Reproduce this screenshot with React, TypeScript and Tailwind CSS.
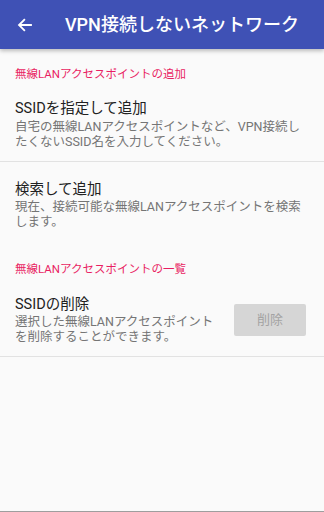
const font = "font-['Roboto','Noto_Sans_CJK_JP',sans-serif]";

function SectionHeader({ children }: { children: React.ReactNode }) {
  return (
    <div className="px-[15px] text-[11.5px] leading-[16px] text-[#e91e63]">
      {children}
    </div>
  );
}

export default function App() {
  return (
    <div className={`${font} flex h-[512px] w-[324px] flex-col overflow-hidden bg-[#fafafa]`}>
      <header className="relative z-10 flex h-[49px] shrink-0 items-center bg-[#3f51b5] shadow-[0_2px_4px_rgba(0,0,0,0.25)]">
        <svg
          className="ml-[16px] h-[18px] w-[18px]"
          viewBox="0 0 24 24"
          fill="none"
          stroke="white"
          strokeWidth="2.4"
          strokeLinecap="square"
        >
          <path d="M20 12H5M11 5l-7 7 7 7" />
        </svg>
        <h1 className="ml-[31px] whitespace-nowrap text-[18px] font-medium leading-[24px] text-white">
          VPN接続しないネットワーク
        </h1>
      </header>

      <div className="flex flex-1 flex-col">
        <div className="pt-[17px]">
          <SectionHeader>無線LANアクセスポイントの追加</SectionHeader>
        </div>

        <div className="border-b border-[#e2e2e2] px-[15px] pb-[12px] pt-[18px]">
          <div className="text-[14.5px] leading-[18px] text-[#212121]">SSIDを指定して追加</div>
          <p className="mt-[1px] whitespace-nowrap text-[12.5px] leading-[15px] text-[#757575]">
            自宅の無線LANアクセスポイントなど、VPN接続し
            <br />
            たくないSSID名を入力してください。
          </p>
        </div>

        <div className="px-[15px] pt-[19px]">
          <div className="text-[14.5px] leading-[18px] text-[#212121]">検索して追加</div>
          <p className="mt-[1px] whitespace-nowrap text-[12.5px] leading-[14.5px] text-[#757575]">
            現在、接続可能な無線LANアクセスポイントを検索
            <br />
            します。
          </p>
        </div>

        <div className="pt-[32px]">
          <SectionHeader>無線LANアクセスポイントの一覧</SectionHeader>
        </div>

        <div className="flex items-center justify-between border-b border-[#e2e2e2] pb-[12px] pl-[15px] pr-[18px] pt-[19px]">
          <div>
            <div className="text-[14.5px] leading-[18px] text-[#212121]">SSIDの削除</div>
            <p className="mt-0 whitespace-nowrap text-[12.5px] leading-[15px] text-[#757575]">
              選択した無線LANアクセスポイント
              <br />
              を削除することができます。
            </p>
          </div>
          <button className="h-[32px] w-[72px] rounded-[2px] bg-[#d6d6d6] text-[13px] text-[#a3a3a3]">
            削除
          </button>
        </div>
      </div>
      <div className="h-[1px] shrink-0 bg-[#9e9e9e]" />
    </div>
  );
}
